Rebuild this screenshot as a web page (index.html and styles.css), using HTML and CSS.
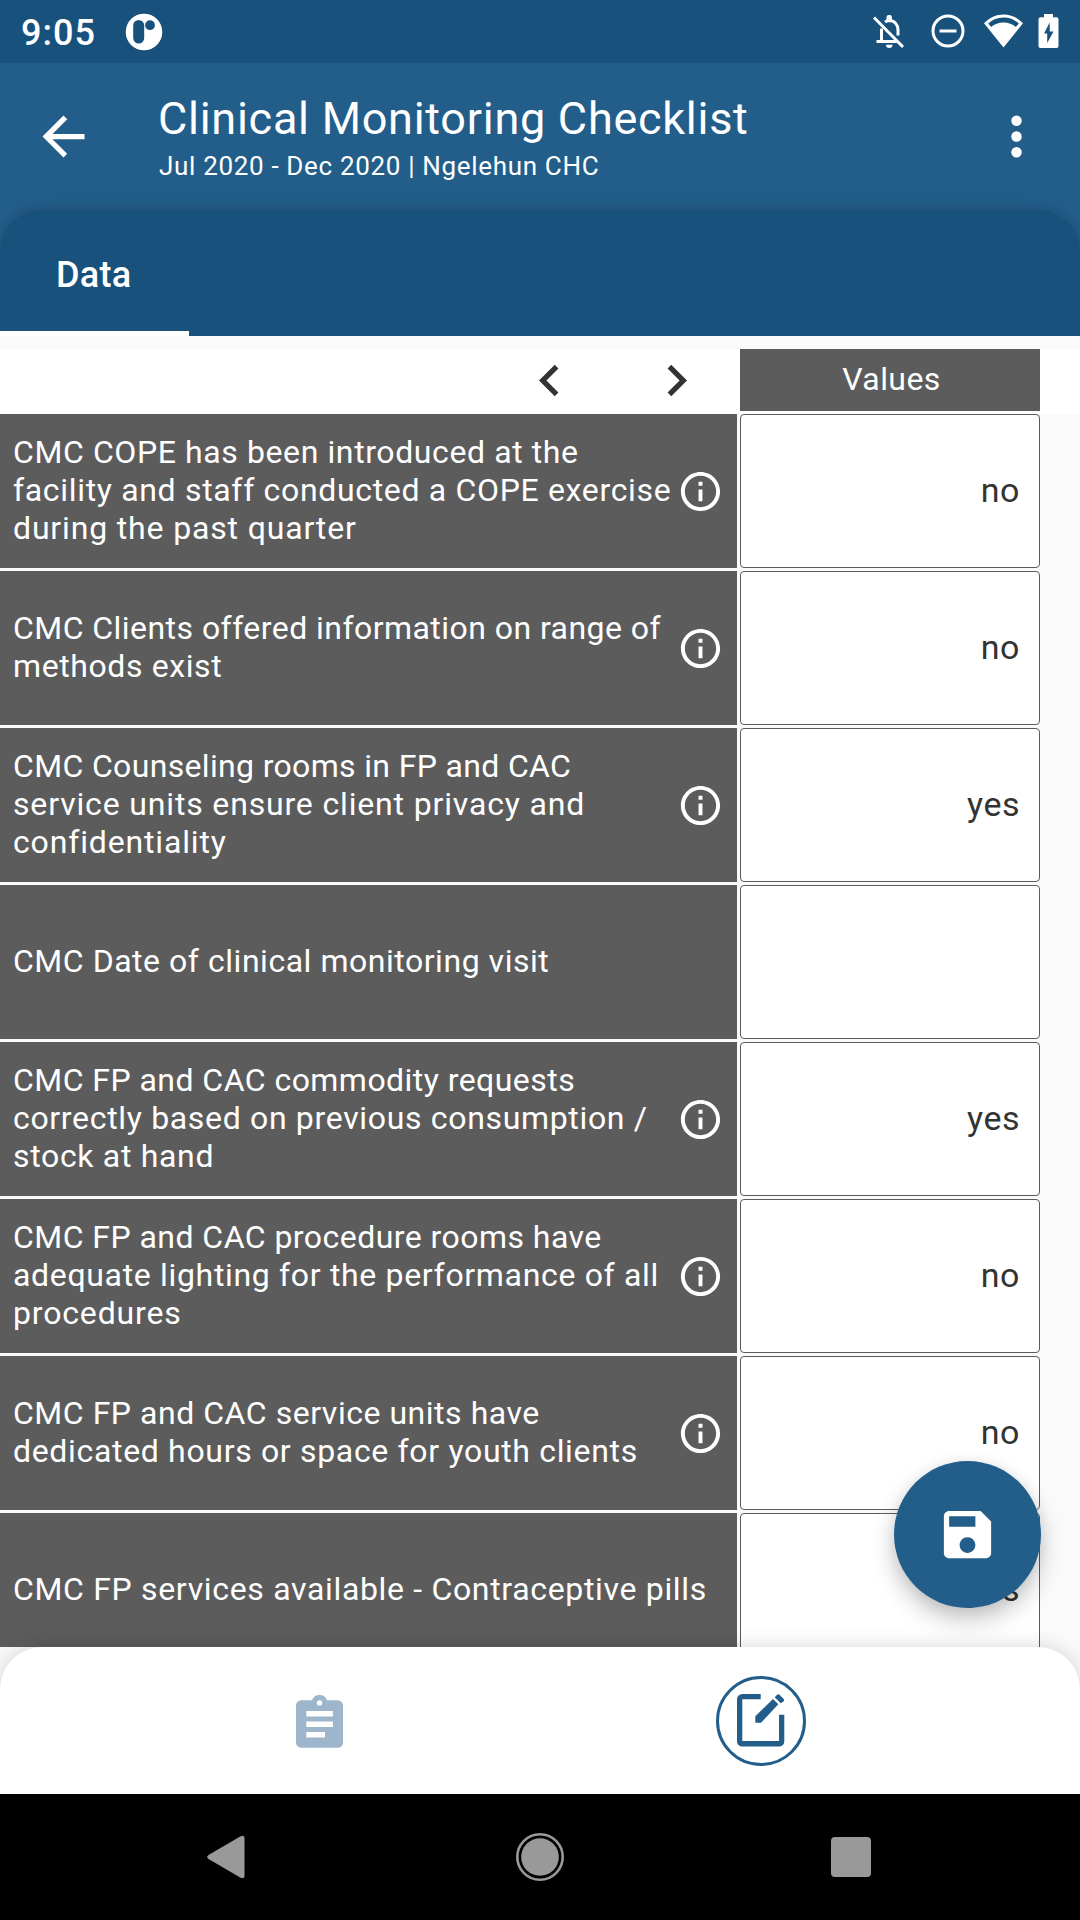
FILE: index.html
```html
<!DOCTYPE html>
<html lang="en">
<head>
<meta charset="utf-8">
<title>Clinical Monitoring Checklist</title>
<link rel="stylesheet" href="styles.css">
</head>
<body>
<svg width="0" height="0" class="defs">
  <symbol id="info" viewBox="0 0 24 24"><path d="M11 7h2v2h-2zm0 4h2v6h-2zm1-9C6.480 2 2 6.480 2 12s4.480 10 10 10 10-4.480 10-10S17.520 2 12 2zm0 18c-4.410 0-8-3.590-8-8s3.590-8 8-8 8 3.590 8 8-3.590 8-8 8z"/></symbol>
</svg>
<div class="screen">
  <div class="status">
    <span class="clock">9:05</span>
    <svg width="38" height="38" viewBox="0 0 38 38"><path fill-rule="evenodd" d="M19 .7a18.300 18.300 0 1 1 0 36.600 18.300 18.300 0 0 1 0-36.600zM13.700 7a5.500 5.500 0 0 0-5.500 5.500v12.500a5.500 5.500 0 0 0 11 0V12.500A5.500 5.500 0 0 0 13.700 7zM25 7.300a4.900 4.900 0 1 0 0 9.800 4.900 4.900 0 0 0 0-9.800z"/></svg>
    <div class="status-icons">
      <svg width="34" height="34" viewBox="0 0 34 34"><g fill="none" stroke="#fff" stroke-width="3"><path d="M2 2.500 31 32"/><path d="M9.500 13.500V26M4.500 26.500H25.500M13 7.200c1-.9 2.200-1.500 4-1.700 5.500 0 9 4 9 9.500v5.500"/></g><path d="M14.500 5V2.500a2.700 2.700 0 0 1 5.400 0V5zM14 29.700h6.500a3.200 3.200 0 0 1-6.500 0z"/></svg>
      <svg width="34" height="34" viewBox="0 0 34 34"><g fill="none" stroke="#fff" stroke-width="3"><circle cx="17" cy="17" r="15"/><path d="M8.500 17h17"/></g></svg>
      <svg width="39" height="34" viewBox="0 0 39 34"><path fill-rule="evenodd" d="M19.500 33.500 0 9.300C5.500 3.500 12 .5 19.500.5S33.500 3.500 39 9.300zM7.200 13C10.500 10 14.500 8.500 19.500 8.500S28.500 10 31.800 13l3-3.500C30.500 5.500 25.500 3.500 19.500 3.500S8.500 5.500 4.200 9.500z"/></svg>
      <svg width="21" height="34" viewBox="0 0 21 34"><path fill-rule="evenodd" d="M6 0h9v3.200h3.500A2 2 0 0 1 20.500 5.200V32a2 2 0 0 1-2 2h-16a2 2 0 0 1-2-2V5.200a2 2 0 0 1 2-2H6zM11.700 8.500 6 19.500h3.200v9.500L15.500 17.500h-3.800z"/></svg>
    </div>
  </div>

  <header class="appbar">
    <svg width="63" height="63" viewBox="0 0 24 24"><path d="M20 11H7.830l5.590-5.590L12 4l-8 8 8 8 1.410-1.410L7.830 13H20v-2z"/></svg>
    <div class="titles">
      <div class="title">Clinical Monitoring Checklist</div>
      <div class="subtitle">Jul 2020 - Dec 2020 | Ngelehun CHC</div>
    </div>
    <svg width="63" height="63" viewBox="0 0 24 24"><circle cx="12" cy="6" r="2"/><circle cx="12" cy="12" r="2"/><circle cx="12" cy="18" r="2"/></svg>
  </header>

  <nav class="tabs"><div class="tab">Data</div></nav>

  <main class="content">
    <div class="head">
      <div class="pager">
        <svg width="63" height="63" viewBox="0 0 24 24"><path d="M15.410 7.410L14 6l-6 6 6 6 1.410-1.410L10.830 12z"/></svg>
        <svg width="63" height="63" viewBox="0 0 24 24"><path d="M10 6L8.590 7.410 13.170 12l-4.580 4.590L10 18l6-6z"/></svg>
      </div>
      <div class="col">Values</div>
    </div>
    <div class="rows">
      <div class="row"><div class="label"><p><span>CMC COPE has been introduced at the</span><span class="n">facility and staff conducted a COPE exercise</span><span class="w">during the past quarter</span></p><svg><use href="#info"/></svg></div><div class="cell">no</div></div>
      <div class="row"><div class="label"><p><span class="t">CMC Clients offered information on range of</span><span>methods exist</span></p><svg><use href="#info"/></svg></div><div class="cell">no</div></div>
      <div class="row"><div class="label"><p><span class="tt">CMC Counseling rooms in FP and CAC</span><span class="w">service units ensure client privacy and</span><span class="w">confidentiality</span></p><svg><use href="#info"/></svg></div><div class="cell">yes</div></div>
      <div class="row"><div class="label"><p><span class="s">CMC Date of clinical monitoring visit</span></p></div><div class="cell"></div></div>
      <div class="row"><div class="label"><p><span class="t">CMC FP and CAC commodity requests</span><span class="n">correctly based on previous consumption /</span><span class="n">stock at hand</span></p><svg><use href="#info"/></svg></div><div class="cell">yes</div></div>
      <div class="row"><div class="label"><p><span class="t">CMC FP and CAC procedure rooms have</span><span class="n">adequate lighting for the performance of all</span><span class="w">procedures</span></p><svg><use href="#info"/></svg></div><div class="cell">no</div></div>
      <div class="row"><div class="label"><p><span class="s">CMC FP and CAC service units have</span><span class="n">dedicated hours or space for youth clients</span></p><svg><use href="#info"/></svg></div><div class="cell">no</div></div>
      <div class="row"><div class="label"><p><span class="n">CMC FP services available - Contraceptive pills</span></p></div><div class="cell">yes</div></div>
    </div>
    <div class="fab"><svg width="63" height="63" viewBox="0 0 24 24"><path d="M17 3H5c-1.110 0-2 .9-2 2v14c0 1.100.89 2 2 2h14c1.100 0 2-.9 2-2V7l-4-4zm-5 16c-1.660 0-3-1.340-3-3s1.340-3 3-3 3 1.340 3 3-1.340 3-3 3zm3-10H5V5h10v4z"/></svg></div>
  </main>

  <nav class="bottom">
    <div class="item">
      <svg class="muted" width="47" height="53" viewBox="0 0 47 53"><path fill-rule="evenodd" d="M5.300 5.300H16a8 8 0 0 1 15 0h10.700A5.300 5.300 0 0 1 47 10.600v36.800a5.300 5.300 0 0 1-5.300 5.300H5.300A5.300 5.300 0 0 1 0 47.400V10.600a5.300 5.300 0 0 1 5.300-5.300zM23.500 5.200a2.700 2.700 0 1 0 0 5.400 2.700 2.700 0 0 0 0-5.400zM10.300 16v5.500h26.600V16zM10.300 26.400v5.500h26.600v-5.500zM10.300 37v5.500H29V37z"/></svg>
    </div>
    <div class="item">
      <div class="ring">
        <svg width="48" height="53" viewBox="0 0 48 53"><path d="M23.700 0v5.300H5.300v41.700H42V20.700h5.300V47.400a5.300 5.300 0 0 1-5.300 5.200H5.300A5.300 5.300 0 0 1 0 47.400V5.300A5.300 5.300 0 0 1 5.300 0z"/><path d="M18.300 22.300 36 5l5.300 5.300L24 28.700h-5.700zM37.700 3.300l2.200-2.300q1.400-1.500 2.800 0l3.800 3.800q1.300 1.300 0 2.700L43.700 9.300z"/></svg>
      </div>
    </div>
  </nav>

  <div class="system">
    <svg width="40" height="44" viewBox="0 0 40 44"><path d="M34.200 1.600Q38.500-.5 38.500 3v38q0 3.500-4.300 1.400L2.500 23.900q-2.600-1.900 0-3.800z"/></svg>
    <svg width="48" height="48" viewBox="0 0 48 48"><circle cx="24" cy="24" r="22.700" fill="none" stroke="#999" stroke-width="2.600"/><circle cx="24" cy="24" r="18.800"/></svg>
    <svg width="40" height="40" viewBox="0 0 40 40"><rect width="40" height="40" rx="4"/></svg>
  </div>
</div>
</body>
</html>
```
FILE: styles.css
```css
* { box-sizing: border-box; margin: 0; padding: 0; }
body { background: #fafafa; font-family: Roboto, "Liberation Sans", sans-serif; color: #fff; }
svg { display: block; fill: #fff; flex: none; }
.defs { position: absolute; }
.screen { width: 1080px; height: 1920px; display: flex; flex-direction: column; overflow: hidden; }

/* Status bar */
.status { height: 63px; flex: none; background: #17517c; display: flex; align-items: center; padding: 0 21px; }
.clock { font-size: 36px; font-weight: 500; letter-spacing: 1px; width: 104px; line-height: 42px; padding-top: 3px; }
.status-icons { display: flex; margin-left: auto; }
.status-icons svg:nth-child(1) { margin-right: 25px; margin-top: 1px; }
.status-icons svg:nth-child(2) { margin-right: 19px; }
.status-icons svg:nth-child(3) { margin-right: 15px; }

/* App bar; it runs on behind the rounded corners of the tabs */
.appbar { height: 189px; margin-bottom: -42px; padding: 0 32px 42px; flex: none; background: #235e8b; display: flex; align-items: center; }
.titles { margin-left: 63px; flex: 1; }
.title { font-size: 45px; line-height: 52px; letter-spacing: .73px; white-space: nowrap; }
.subtitle { font-size: 26px; line-height: 30px; letter-spacing: .67px; margin-top: 6px; margin-left: 1px; white-space: nowrap; }

.tabs { position: relative; height: 126px; flex: none; display: flex; border-radius: 42px 42px 0 0; background: #17517c; box-shadow: 0 0 16px rgba(30, 50, 80, .45); }
.tab { width: 189px; border-bottom: 5px solid #fff; font-size: 36px; font-weight: 500; letter-spacing: .3px; line-height: 42px; padding: 44px 0 0 56px; }

/* Data table */
.content { position: relative; flex: none; height: 1311px; padding-top: 13px; background: #fafafa; }
.head { height: 65px; display: grid; grid-template-columns: 740px 300px; background: #fff; }
.pager { display: flex; justify-content: flex-end; gap: 64px; padding-right: 32px; }
.pager svg { fill: #333; }
.col { height: 62px; background: #5c5c5c; font-size: 32px; letter-spacing: .4px; line-height: 60px; text-align: center; padding-left: 3px; }
.rows { height: 1233px; overflow: hidden; }
.row { height: 154px; margin-bottom: 3px; display: grid; grid-template-columns: 737px 300px; gap: 3px; }
.label { background: #5c5c5c; display: flex; align-items: center; justify-content: space-between; padding: 0 13px 0 13px; }
.label p { padding-bottom: 2px; }
.label span { display: block; font-size: 32px; line-height: 38px; letter-spacing: .6px; white-space: nowrap; }
.label .tt { letter-spacing: .34px; }
.label .t { letter-spacing: .45px; }
.label .s { letter-spacing: .53px; }
.label .n { letter-spacing: .67px; }
.label .w { letter-spacing: .84px; }
.label svg { width: 47px; height: 47px; margin-left: -10px; }
.cell { background: #fff; border: 1px solid #5c5c5c; border-radius: 4px; color: #333; font-size: 34px; letter-spacing: .5px; line-height: 151px; text-align: right; padding-right: 19px; }
.fab { position: absolute; left: 894px; top: 1125px; width: 147px; height: 147px; border-radius: 50%; background: #235e8b; display: grid; place-items: center; box-shadow: 0 12px 24px rgba(0, 0, 0, .22), 0 2px 14px rgba(0, 0, 0, .08); }

/* Bottom navigation; the list background shows behind its corners */
.bottom { position: relative; height: 147px; flex: none; background: #fff; border-radius: 42px 42px 0 0; display: grid; grid-template-columns: 638px 246px; box-shadow: 0 0 20px rgba(0, 0, 0, .16); }
.item { display: grid; place-items: center; }
.muted { fill: #9db6cc; margin-top: 1px; }
.ring { width: 90px; height: 90px; border: 3px solid #235e8b; border-radius: 50%; display: grid; place-items: center; }
.ring svg { fill: #235e8b; }

.system { position: relative; height: 126px; flex: none; background: #000; display: flex; align-items: center; justify-content: space-between; padding: 0 209px 0 206px; }
.system svg { fill: #999; }
.system svg:nth-child(2) { margin-left: 3px; }
```
